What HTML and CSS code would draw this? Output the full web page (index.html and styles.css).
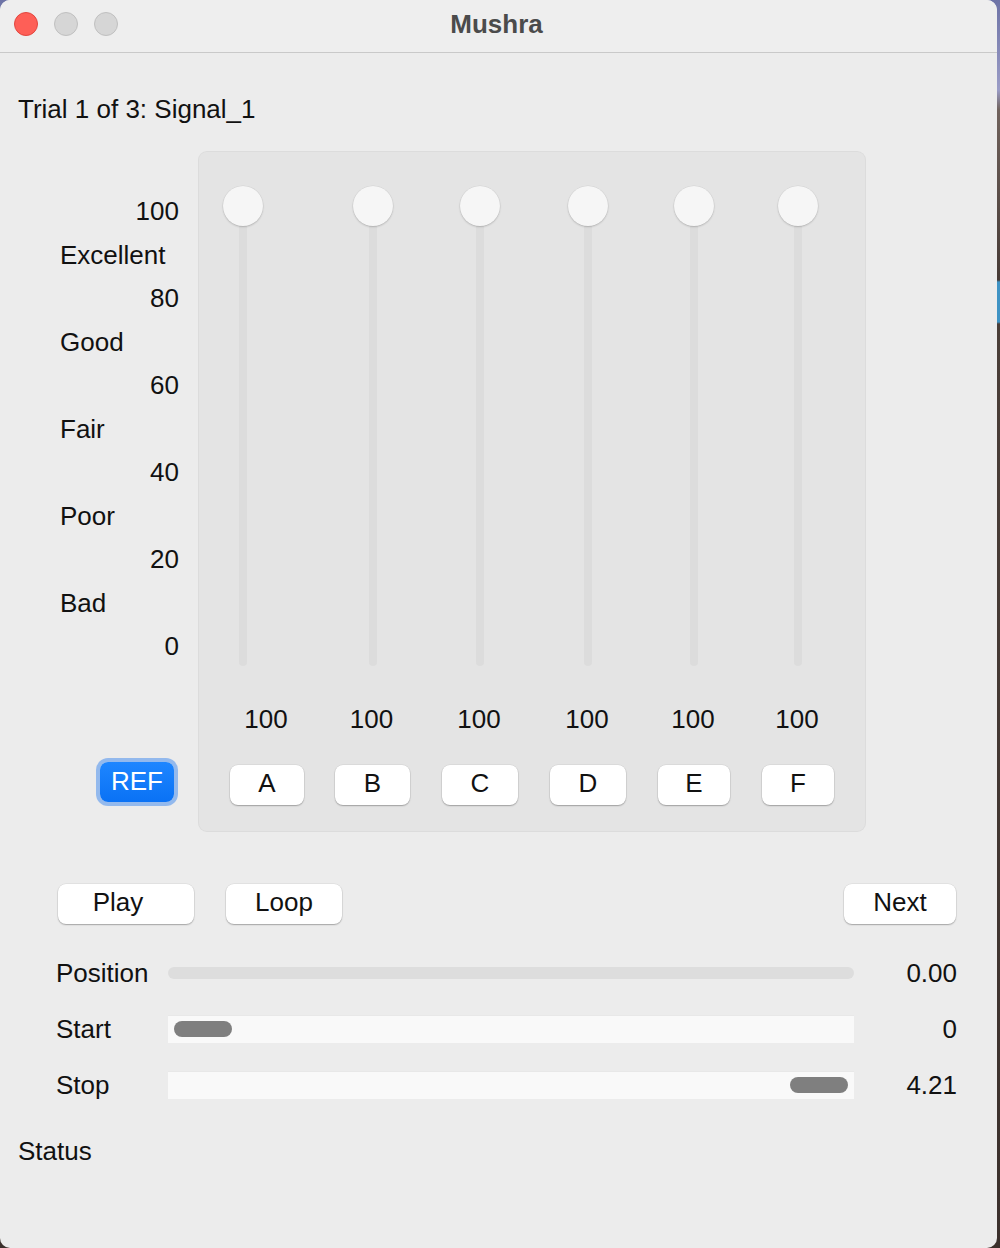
FILE: index.html
```html
<!DOCTYPE html>
<html>
<head>
<meta charset="utf-8">
<title>Mushra</title>
<link rel="stylesheet" href="styles.css">
</head>
<body>
<div class="window">
  <div class="titlebar">
    <div class="lights"><span class="light close"></span><span class="light"></span><span class="light"></span></div>
    <div class="title">Mushra</div>
    <div class="spacer"></div>
  </div>
  <div class="content">
    <div class="trial">Trial 1 of 3: Signal_1</div>
    <div class="main">
      <div class="scale">
        <div class="scale-rows">
          <div class="num">100</div>
          <div class="word">Excellent</div>
          <div class="num">80</div>
          <div class="word">Good</div>
          <div class="num">60</div>
          <div class="word">Fair</div>
          <div class="num">40</div>
          <div class="word">Poor</div>
          <div class="num">20</div>
          <div class="word">Bad</div>
          <div class="num">0</div>
        </div>
        <div class="ref-wrap"><button class="ref">REF</button></div>
      </div>
      <div class="group">
        <div class="col">
          <div class="slider shift"><div class="track"></div><div class="thumb"></div></div>
          <div class="val">100</div>
          <button class="btn cond w74">A</button>
        </div>
        <div class="col">
          <div class="slider"><div class="track"></div><div class="thumb"></div></div>
          <div class="val">100</div>
          <button class="btn cond w75">B</button>
        </div>
        <div class="col">
          <div class="slider"><div class="track"></div><div class="thumb"></div></div>
          <div class="val">100</div>
          <button class="btn cond w76">C</button>
        </div>
        <div class="col">
          <div class="slider"><div class="track"></div><div class="thumb"></div></div>
          <div class="val">100</div>
          <button class="btn cond w76">D</button>
        </div>
        <div class="col">
          <div class="slider"><div class="track"></div><div class="thumb"></div></div>
          <div class="val">100</div>
          <button class="btn cond w72">E</button>
        </div>
        <div class="col">
          <div class="slider"><div class="track"></div><div class="thumb"></div></div>
          <div class="val">100</div>
          <button class="btn cond w72">F</button>
        </div>
      </div>
    </div>
    <div class="transport">
      <button class="btn play">Play</button>
      <button class="btn loop">Loop</button>
      <button class="btn next">Next</button>
    </div>
    <div class="rows">
      <div class="label">Position</div>
      <div class="cell"><div class="pos-track"></div></div>
      <div class="value">0.00</div>
      <div class="label">Start</div>
      <div class="cell"><div class="range-track"><div class="handle"></div></div></div>
      <div class="value">0</div>
      <div class="label">Stop</div>
      <div class="cell"><div class="range-track end"><div class="handle"></div></div></div>
      <div class="value">4.21</div>
    </div>
    <div class="status">Status</div>
  </div>
</div>
</body>
</html>
```

FILE: styles.css
```css
html, body {
  margin: 0;
  padding: 0;
}
body {
  width: 1000px;
  height: 1248px;
  overflow: hidden;
  font-family: "Liberation Sans", Arial, sans-serif;
  font-size: 26px;
  color: #111;
  background: linear-gradient(to bottom, #6d73a6 0, #9a9cc6 90px, #70625c 110px, #463a35 280px, #3f93c4 282px, #3f93c4 322px, #4a3e38 324px, #3b302c 100%);
}
.window {
  width: 997px;
  height: 1248px;
  background: #ececec;
  border-radius: 10px;
  overflow: hidden;
}
.titlebar {
  height: 52px;
  border-bottom: 1px solid #c9c9c9;
  background: #eeeeee;
  display: grid;
  grid-template-columns: 1fr auto 1fr;
  align-items: center;
}
.lights {
  display: flex;
  gap: 16px;
  padding-left: 14px;
  padding-bottom: 5px;
}
.light {
  box-sizing: border-box;
  width: 24px;
  height: 24px;
  border-radius: 50%;
  background: #d6d6d6;
  border: 1px solid #c0c0c0;
}
.light.close {
  background: #fe5f57;
  border-color: #e2463f;
}
.title {
  font-weight: bold;
  font-size: 26px;
  color: #4b4b4b;
  padding-bottom: 4px;
  padding-right: 4px;
}
.content {
  padding-left: 18px;
}
.trial {
  margin-top: 41px;
  line-height: 30px;
}
.main {
  margin-top: 28px;
  display: flex;
}
.scale {
  width: 181px;
  padding-top: 38px;
}
.scale-rows div {
  height: 43.5px;
  line-height: 43.5px;
}
.num {
  text-align: right;
  padding-right: 20px;
}
.word {
  padding-left: 42px;
}
.ref-wrap {
  display: flex;
  justify-content: flex-end;
  padding-right: 25px;
  margin-top: 93.5px;
}
button {
  font-family: inherit;
  font-size: 26px;
  padding: 0;
  margin: 0;
  border: none;
  color: #111;
}
.ref {
  width: 74px;
  height: 40px;
  border-radius: 8px;
  color: #fff;
  padding-bottom: 2px;
  background: linear-gradient(to bottom, #1e86ff, #0a72f5);
  box-shadow: 0 0 0 4px rgba(40, 125, 240, 0.45);
}
.group {
  width: 666px;
  box-sizing: border-box;
  padding: 34px 17px 26px 14px;
  background: #e4e4e4;
  border-radius: 8px;
  box-shadow: 0 0 0 1px #dcdcdc;
  display: grid;
  grid-template-columns: 108px 103px 112px 104px 108px 100px;
}
.col {
  display: flex;
  flex-direction: column;
  align-items: center;
}
.slider {
  position: relative;
  width: 40px;
  height: 480px;
}
.slider.shift {
  margin-right: 48px;
}
.track {
  width: 8px;
  height: 460px;
  margin: 20px auto 0;
  background: #dcdcdc;
  border-radius: 4px;
}
.thumb {
  position: absolute;
  top: 0;
  left: 0;
  width: 40px;
  height: 40px;
  border-radius: 50%;
  background: #f6f6f6;
  box-shadow: 0 1px 2px rgba(0, 0, 0, 0.18), 0 0 0 0.5px rgba(0, 0, 0, 0.06);
}
.val {
  margin-top: 38px;
  line-height: 30px;
  padding-right: 2px;
}
.btn {
  height: 40px;
  background: #fff;
  border-radius: 8px;
  padding-bottom: 3px;
  box-shadow: 0 1px 1.5px rgba(0, 0, 0, 0.28), 0 0 0 0.5px rgba(0, 0, 0, 0.08);
}
.cond {
  margin-top: 31px;
}
.w72 { width: 72px; }
.w74 { width: 74px; }
.w75 { width: 75px; }
.w76 { width: 76px; }
.transport {
  margin-top: 53px;
  display: flex;
  padding-left: 40px;
  padding-right: 41px;
}
.play {
  width: 136px;
  padding-right: 16px;
}
.loop {
  width: 116px;
  margin-left: 32px;
}
.next {
  width: 112px;
  margin-left: auto;
}
.rows {
  margin-top: 35px;
  display: grid;
  grid-template-columns: 112px 686px 1fr;
  grid-auto-rows: 28px;
  row-gap: 28px;
  align-items: center;
  padding-left: 38px;
  padding-right: 40px;
}
.label, .value {
  line-height: 28px;
}
.value {
  text-align: right;
}
.pos-track {
  height: 12px;
  border-radius: 6px;
  background: #dddddd;
}
.range-track {
  height: 28px;
  background: #f9f9f9;
  box-shadow: inset 0 1px 0 #e8e8e8;
  display: flex;
  align-items: center;
  padding: 0 6px;
}
.range-track.end {
  justify-content: flex-end;
}
.handle {
  width: 58px;
  height: 16px;
  border-radius: 8px;
  background: #7f7f7f;
}
.status {
  margin-top: 37px;
  line-height: 30px;
}
```
